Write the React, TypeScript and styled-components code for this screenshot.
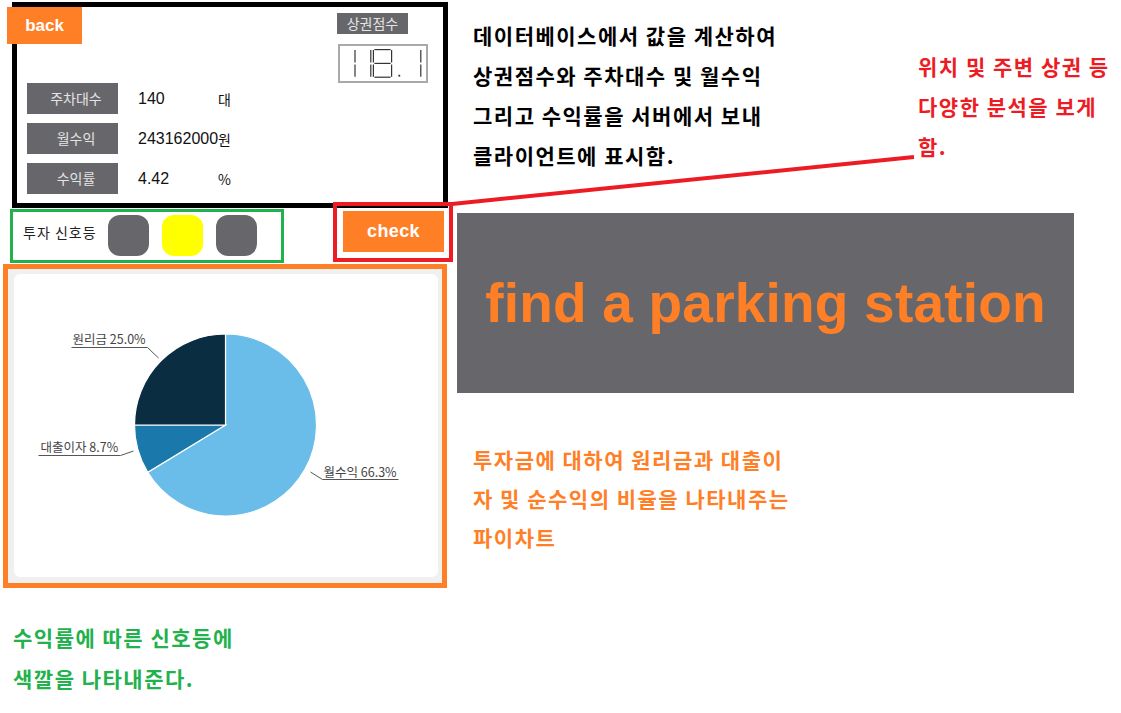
import React from "react";
import styled, { createGlobalStyle } from "styled-components";

const ORANGE = "#FF7F27";
const RED = "#ED1C24";
const GREEN = "#22B14C";
const GRAY = "#67676B";

const KR = `"Noto Sans CJK KR", "Noto Sans", sans-serif`;
const LATIN = `"Liberation Sans", "Noto Sans CJK KR", sans-serif`;

const GlobalStyle = createGlobalStyle`
  html, body {
    margin: 0;
    padding: 0;
    background: #fff;
  }

  body {
    font-family: ${KR};
  }
`;

const stats = [
	{ label: "주차대수", value: "140", unit: "대" },
	{ label: "월수익", value: "243162000", unit: "원" },
	{ label: "수익률", value: "4.42", unit: "%" },
];

const lights = ["#67676B", "#FFFF00", "#67676B"];

function SevenSegment() {
	// "118.1" drawn as thin segments, like the lcd widget
	const vert = (x: number) => (
		<>
			<line x1={x} y1={4} x2={x} y2={16.4} />
			<line x1={x} y1={18.4} x2={x} y2={30.8} />
		</>
	);
	return (
		<svg width="86" height="35" viewBox="0 0 86 35">
			<g stroke="#333" strokeWidth="1.2" fill="none">
				{vert(15)}
				{vert(30.8)}
				{vert(33.4)}
				{vert(51.6)}
				<line x1={34.4} y1={3.6} x2={50.6} y2={3.6} />
				<line x1={34.4} y1={17.4} x2={50.6} y2={17.4} />
				<line x1={34.4} y1={31.2} x2={50.6} y2={31.2} />
				{vert(80.8)}
			</g>
			<rect x="58.4" y="28.8" width="1.8" height="1.8" fill="#333" />
		</svg>
	);
}

function PieChart() {
	return (
		<svg width="100%" height="100%" viewBox="0 0 423 303">
			<g stroke="#fff" strokeWidth="1.2">
				<path d="M211,151 L211,60 A91,91 0 1 1 133.26,198.31 Z" fill="#6BBDE9" />
				<path d="M211,151 L133.26,198.31 A91,91 0 0 1 120,151 Z" fill="#1A78AA" />
				<path d="M211,151 L120,151 A91,91 0 0 1 211,60 Z" fill="#0B2D42" />
			</g>
			<g stroke="#555" strokeWidth="1" fill="none">
				<polyline points="57,73.5 133,73.5 144,84" />
				<polyline points="24,181.5 106,181.5 119,177" />
				<polyline points="384,205.5 308,205.5 296,198" />
			</g>
			<g fontFamily={KR} fontSize="12.5" fill="#444">
				<text x="58" y="70">원리금 25.0%</text>
				<text x="26" y="178">대출이자 8.7%</text>
				<text x="309" y="203">월수익 66.3%</text>
			</g>
		</svg>
	);
}

export default function App() {
	return (
		<>
			<GlobalStyle />
			<Page>
				<LeftColumn>
					<Panel>
						<BackButton>back</BackButton>
						<ScoreBlock>
							<ScoreLabel>상권점수</ScoreLabel>
							<ScoreDisplay>
								<SevenSegment />
							</ScoreDisplay>
						</ScoreBlock>
						<StatList>
							{stats.map((s) => (
								<StatRow key={s.label}>
									<StatLabel>{s.label}</StatLabel>
									<StatValue>{s.value}</StatValue>
									<StatUnit>{s.unit}</StatUnit>
								</StatRow>
							))}
						</StatList>
					</Panel>

					<ControlRow>
						<SignalBox>
							<SignalTitle>투자 신호등</SignalTitle>
							{lights.map((c, i) => (
								<Light key={i} $color={c} />
							))}
						</SignalBox>
						<CheckFrame>
							<CheckButton>check</CheckButton>
						</CheckFrame>
					</ControlRow>

					<ChartFrame>
						<ChartCard>
							<PieChart />
						</ChartCard>
					</ChartFrame>

					<Note $color={GREEN} $top={29} $left={13} $line={41}>
						수익률에 따른 신호등에
						<br />
						색깔을 나타내준다.
					</Note>
				</LeftColumn>

				<RightColumn>
					<TopNotes>
						<Note $color="#000" $top={15} $left={16} $line={40}>
							데이터베이스에서 값을 계산하여
							<br />
							상권점수와 주차대수 및 월수익
							<br />
							그리고 수익률을 서버에서 보내
							<br />
							클라이언트에 표시함.
						</Note>
						<RedNote $color={RED} $top={46} $left={0} $line={40}>
							위치 및 주변 상권 등
							<br />
							다양한 분석을 보게
							<br />
							함.
						</RedNote>
					</TopNotes>

					<Banner>find a parking station</Banner>

					<Note $color={ORANGE} $top={47} $left={16} $line={39}>
						투자금에 대하여 원리금과 대출이
						<br />
						자 및 순수익의 비율을 나타내주는
						<br />
						파이차트
					</Note>
				</RightColumn>

				<Pointer viewBox="0 0 1121 713">
					<line x1="452" y1="204" x2="914" y2="157" stroke={RED} strokeWidth="4" />
				</Pointer>
			</Page>
		</>
	);
}

const Page = styled.div`
    position: relative;
    display: flex;
    width: 1121px;
    height: 713px;
    overflow: hidden;
`;

const LeftColumn = styled.div`
    flex: 0 0 457px;
    display: flex;
    flex-direction: column;
    align-items: flex-start;
`;

const RightColumn = styled.div`
    flex: 1;
    display: flex;
    flex-direction: column;
    align-items: flex-start;
`;

const Panel = styled.div`
    position: relative;
    box-sizing: border-box;
    width: 436px;
    height: 206px;
    margin: 2px 0 0 12px;
    padding: 6px 15px 9px 10px;
    border: 5px solid #000;
    display: flex;
    flex-direction: column;
`;

const BackButton = styled.div`
    position: absolute;
    top: 0;
    left: -10px;
    width: 75px;
    height: 37px;
    background: ${ORANGE};
    color: #fff;
    font: bold 17px ${LATIN};
    display: flex;
    align-items: center;
    justify-content: center;
`;

const ScoreBlock = styled.div`
    align-self: flex-end;
    display: flex;
    flex-direction: column;
    align-items: flex-start;
    gap: 10px;
`;

const ScoreLabel = styled.div`
    width: 71px;
    height: 21px;
    margin-left: -1px;
    background: ${GRAY};
    color: #e4e4e4;
    font-size: 14px;
    line-height: 21px;
    text-align: center;
`;

const ScoreDisplay = styled.div`
    box-sizing: border-box;
    width: 90px;
    height: 39px;
    border: 2px solid #a9a9a9;
    background: #fff;

    svg {
        display: block;
    }
`;

const StatList = styled.div`
    display: flex;
    flex-direction: column;
    gap: 9px;
`;

const StatRow = styled.div`
    display: flex;
    align-items: center;
    height: 31px;
    white-space: nowrap;
`;

const StatLabel = styled.div`
    box-sizing: border-box;
    width: 91px;
    height: 31px;
    padding-left: 7px;
    margin-right: 20px;
    background: ${GRAY};
    color: #e4e4e4;
    font-size: 14px;
    line-height: 31px;
    text-align: center;
`;

const StatValue = styled.span`
    display: inline-block;
    width: 80px;
    color: #111;
    font: 16px ${LATIN};
`;

const StatUnit = styled.span`
    color: #111;
    font-size: 14px;
`;

const ControlRow = styled.div`
    display: flex;
    align-items: flex-start;
    height: 55px;
`;

const SignalBox = styled.div`
    box-sizing: border-box;
    width: 274px;
    height: 54px;
    margin: 1px 0 0 10px;
    padding: 3px 0 0 10px;
    border: 3px solid ${GREEN};
    display: flex;
    align-items: flex-start;
    gap: 13px;
`;

const SignalTitle = styled.span`
    width: 72px;
    margin-top: 7px;
    color: #222;
    font-size: 14px;
    letter-spacing: 1px;
    white-space: nowrap;
`;

const Light = styled.div<{ $color: string }>`
    width: 41px;
    height: 41px;
    border-radius: 12px;
    background: ${(p) => p.$color};
`;

const CheckFrame = styled.div`
    box-sizing: border-box;
    width: 120px;
    height: 60px;
    margin: -6px 0 0 49px;
    padding: 5px 5px 0 6px;
    border: 4px solid ${RED};
    position: relative;
    z-index: 1;
`;

const CheckButton = styled.div`
    height: 41px;
    background: ${ORANGE};
    color: #fff;
    font: bold 18px ${LATIN};
    letter-spacing: 0.4px;
    display: flex;
    align-items: center;
    justify-content: center;
`;

const ChartFrame = styled.div`
    box-sizing: border-box;
    width: 444px;
    height: 324px;
    margin: 1px 0 0 3px;
    padding: 5px 4px 6px 6px;
    border: 5px solid ${ORANGE};
    background: #f0f0f0;
`;

const ChartCard = styled.div`
    width: 100%;
    height: 100%;
    background: #fff;
    border-radius: 6px;

    svg {
        display: block;
    }
`;

const Note = styled.div<{ $color: string; $top: number; $left: number; $line: number }>`
    margin: ${(p) => p.$top}px 0 0 ${(p) => p.$left}px;
    color: ${(p) => p.$color};
    font-size: 21px;
    font-weight: bold;
    letter-spacing: 1.5px;
    line-height: ${(p) => p.$line}px;
    white-space: nowrap;
`;

const TopNotes = styled.div`
    display: flex;
    align-items: flex-start;
    height: 213px;
    width: 100%;
`;

const RedNote = styled(Note)`
    margin-left: auto;
    width: 203px;
`;

const Banner = styled.div`
    width: 617px;
    height: 180px;
    background: ${GRAY};
    color: ${ORANGE};
    font: bold 55px ${LATIN};
    letter-spacing: 0.2px;
    display: flex;
    align-items: center;
    justify-content: center;
`;

const Pointer = styled.svg`
    position: absolute;
    top: 0;
    left: 0;
    width: 1121px;
    height: 713px;
    pointer-events: none;
    z-index: 2;
`;
